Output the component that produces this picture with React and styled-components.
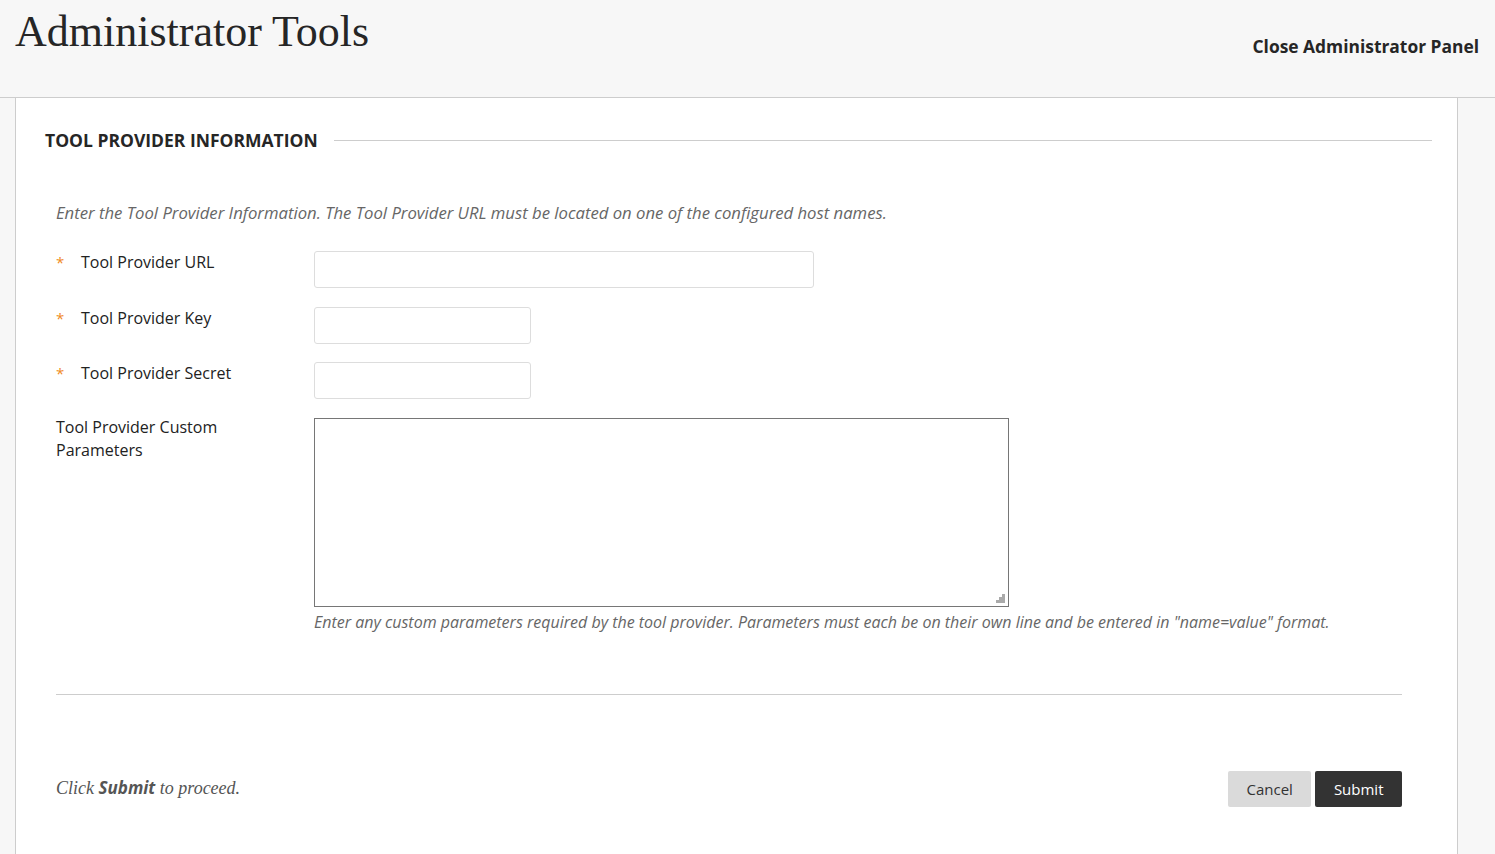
import styled, { createGlobalStyle } from "styled-components";

const GlobalStyle = createGlobalStyle`
  html, body {
    margin: 0;
    padding: 0;
    background: #f7f7f7;
  }
  body {
    font-family: "Open Sans", "Liberation Sans", sans-serif;
    color: #222;
  }
`;

const fields = [
  { label: "Tool Provider URL", required: true, width: 500 },
  { label: "Tool Provider Key", required: true, width: 217 },
  { label: "Tool Provider Secret", required: true, width: 217 },
];

export default function App() {
  return (
    <>
      <GlobalStyle />
      <Page>
        <Header>
          <Title>Administrator Tools</Title>
          <CloseLink href="#">Close Administrator Panel</CloseLink>
        </Header>
        <Body>
          <Content>
            <SectionHead>
              <h2>TOOL PROVIDER INFORMATION</h2>
              <span />
            </SectionHead>
            <Intro>
              Enter the Tool Provider Information. The Tool Provider URL must be
              located on one of the configured host names.
            </Intro>
            <Form>
              {fields.map((f) => (
                <Row key={f.label}>
                  <Label>
                    {f.required && <Star>*</Star>}
                    <span>{f.label}</span>
                  </Label>
                  <TextInput type="text" $width={f.width} />
                </Row>
              ))}
              <Row>
                <Label $wrap>Tool Provider Custom Parameters</Label>
                <div>
                  <AreaWrap>
                    <TextArea />
                  </AreaWrap>
                  <Help>
                    Enter any custom parameters required by the tool provider.
                    Parameters must each be on their own line and be entered in
                    "name=value" format.
                  </Help>
                </div>
              </Row>
            </Form>
            <Divider />
            <Footer>
              <Proceed>
                Click <b>Submit</b> to proceed.
              </Proceed>
              <Buttons>
                <Button>Cancel</Button>
                <Button $primary>Submit</Button>
              </Buttons>
            </Footer>
          </Content>
        </Body>
      </Page>
    </>
  );
}

const Page = styled.div`
  min-height: 854px;
  display: flex;
  flex-direction: column;
`;

const Header = styled.header`
  height: 98px;
  box-sizing: border-box;
  border-bottom: 1px solid #cdcdcd;
  background: #f7f7f7;
  display: flex;
  justify-content: space-between;
  align-items: flex-start;
  padding: 0 16px 0 15px;
`;

const Title = styled.h1`
  margin: 6px 0 0;
  font-family: "Liberation Serif", "DejaVu Serif", serif;
  font-weight: 400;
  font-size: 44px;
  line-height: 52px;
  color: #262626;
`;

const CloseLink = styled.a`
  margin-top: 33px;
  font-size: 17.4px;
  font-weight: 700;
  line-height: 26px;
  color: #262626;
  text-decoration: none;
`;

const Body = styled.div`
  flex: 1;
  display: flex;
  padding: 0 37px 0 15px;
  background: #f7f7f7;
`;

const Content = styled.main`
  flex: 1;
  background: #fff;
  border-left: 1px solid #cdcdcd;
  border-right: 1px solid #cdcdcd;
  padding: 30px 55px 0 40px;
`;

const SectionHead = styled.div`
  display: flex;
  align-items: center;
  gap: 16px;
  margin: 0 -30px 0 -11px;
  h2 {
    margin: 0;
    font-size: 17.5px;
    line-height: 24px;
    font-weight: 700;
    color: #262626;
  }
  span {
    flex: 1;
    height: 1px;
    background: #cdcdcd;
  }
`;

const Intro = styled.p`
  margin: 49px 0 0;
  font-size: 16.7px;
  line-height: 24px;
  font-style: italic;
  color: #666;
`;

const Form = styled.div`
  margin-top: 26px;
  display: flex;
  flex-direction: column;
  gap: 18.6px;
`;

const Row = styled.div`
  display: grid;
  grid-template-columns: 258px 1fr;
  align-items: start;
`;

const Label = styled.label`
  display: flex;
  font-size: 16px;
  line-height: 23px;
  color: #222;
  margin-top: ${(p) => (p.$wrap ? "-2px" : "0")};
  width: ${(p) => (p.$wrap ? "190px" : "auto")};
`;

const Star = styled.span`
  width: 25px;
  color: #f08a24;
  font-size: 15px;
`;

const TextInput = styled.input`
  width: ${(p) => p.$width}px;
  height: 37px;
  box-sizing: border-box;
  border: 1px solid #ddd;
  border-radius: 3px;
  background: #fff;
  font-family: inherit;
  font-size: 16px;
  padding: 0 8px;
  margin: 0;
  outline: none;
`;

const AreaWrap = styled.div`
  position: relative;
  width: 695px;
  &::after {
    content: "";
    position: absolute;
    right: 4px;
    bottom: 4px;
    width: 9px;
    height: 9px;
    pointer-events: none;
    background:
      linear-gradient(#aaa, #aaa) 6px 0 / 3px 3px no-repeat,
      linear-gradient(#aaa, #aaa) 3px 3px / 3px 3px no-repeat,
      linear-gradient(#aaa, #aaa) 6px 3px / 3px 3px no-repeat,
      linear-gradient(#aaa, #aaa) 0 6px / 3px 3px no-repeat,
      linear-gradient(#aaa, #aaa) 3px 6px / 3px 3px no-repeat,
      linear-gradient(#aaa, #aaa) 6px 6px / 3px 3px no-repeat;
  }
`;

const TextArea = styled.textarea`
  display: block;
  width: 695px;
  height: 189px;
  box-sizing: border-box;
  border: 1px solid #767676;
  border-radius: 0;
  font-family: inherit;
  font-size: 16px;
  margin: 0;
  resize: none;
  outline: none;
`;

const Help = styled.p`
  margin: 3px 0 0;
  font-size: 16px;
  line-height: 24px;
  font-style: italic;
  color: #666;
`;

const Divider = styled.hr`
  margin: 60px 0 0;
  border: none;
  border-top: 1px solid #cdcdcd;
`;

const Footer = styled.div`
  display: flex;
  justify-content: space-between;
  align-items: center;
  margin-top: 76px;
`;

const Proceed = styled.p`
  margin: 0 0 3px;
  font-family: "Liberation Serif", "DejaVu Serif", serif;
  font-style: italic;
  font-size: 18px;
  color: #555;
  b {
    font-family: "Open Sans", "Liberation Sans", sans-serif;
    font-weight: 700;
    font-size: 17px;
  }
`;

const Buttons = styled.div`
  display: flex;
  gap: 4px;
`;

const Button = styled.button`
  height: 36px;
  padding: 0 18.5px;
  border: none;
  border-radius: 2px;
  font-family: "Open Sans", "Liberation Sans", sans-serif;
  font-size: 15px;
  background: ${(p) => (p.$primary ? "#333" : "#dadada")};
  color: ${(p) => (p.$primary ? "#fff" : "#333")};
  cursor: pointer;
`;
